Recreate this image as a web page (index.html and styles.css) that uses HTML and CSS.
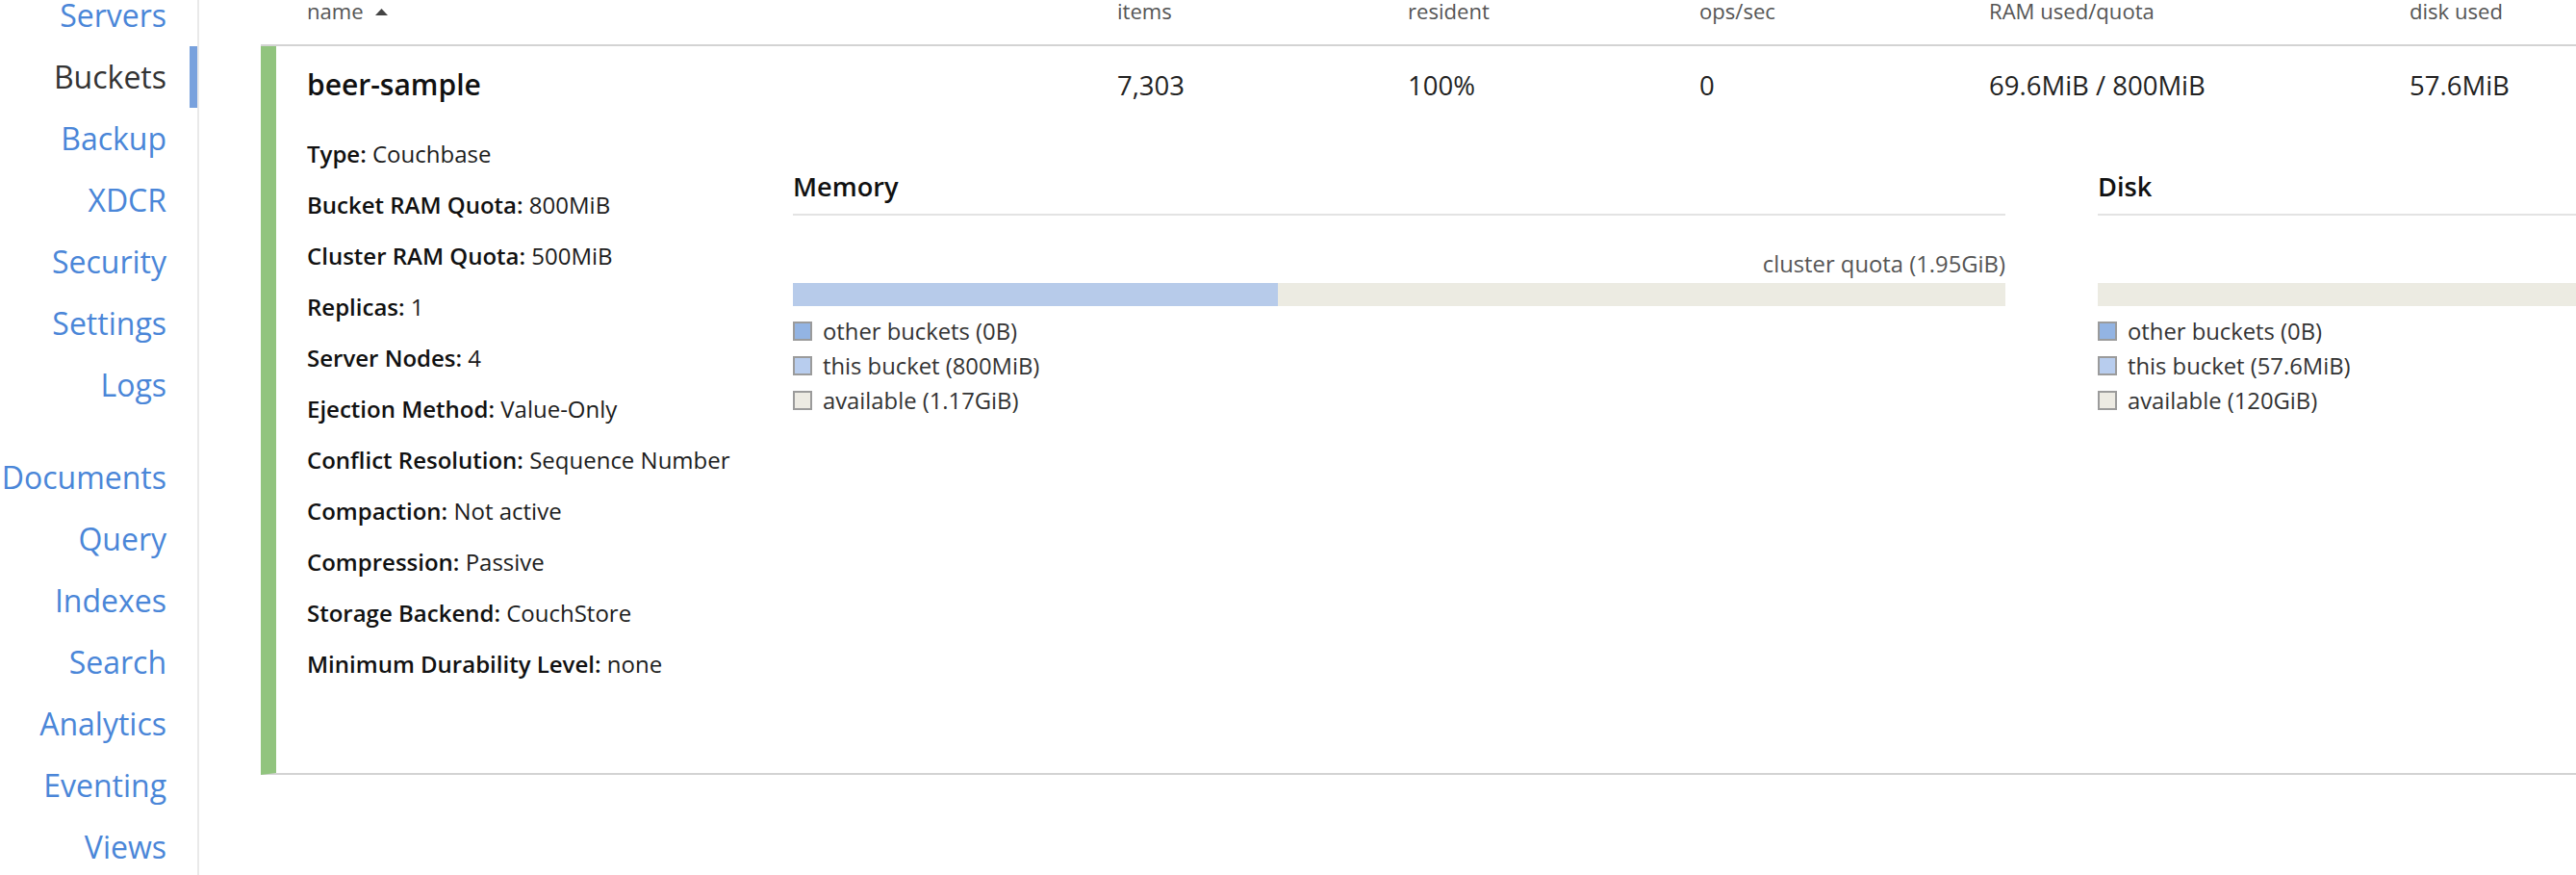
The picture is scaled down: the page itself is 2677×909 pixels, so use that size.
FILE: index.html
```html
<!DOCTYPE html>
<html lang="en">
<head>
<meta charset="utf-8">
<title>Buckets</title>
<link rel="stylesheet" href="styles.css">
</head>
<body>
<div class="page">
  <aside class="sidebar">
    <nav class="nav">
      <ul class="nav-group">
        <li><a class="nav-link">Servers</a></li>
        <li><a class="nav-link active">Buckets</a></li>
        <li><a class="nav-link">Backup</a></li>
        <li><a class="nav-link">XDCR</a></li>
        <li><a class="nav-link">Security</a></li>
        <li><a class="nav-link">Settings</a></li>
        <li><a class="nav-link">Logs</a></li>
      </ul>
      <ul class="nav-group">
        <li><a class="nav-link">Documents</a></li>
        <li><a class="nav-link">Query</a></li>
        <li><a class="nav-link">Indexes</a></li>
        <li><a class="nav-link">Search</a></li>
        <li><a class="nav-link">Analytics</a></li>
        <li><a class="nav-link">Eventing</a></li>
        <li><a class="nav-link">Views</a></li>
      </ul>
    </nav>
  </aside>

  <main class="main">
    <div class="table-header cols">
      <div class="th">name<svg class="sort-caret" viewBox="0 0 13 7" width="13" height="7"><path d="M0 7 L6.5 0 L13 7 Z" fill="#444"/></svg></div>
      <div class="th">items</div>
      <div class="th">resident</div>
      <div class="th">ops/sec</div>
      <div class="th">RAM used/quota</div>
      <div class="th">disk used</div>
    </div>

    <div class="bucket-row">
      <div class="row-top cols">
        <div class="bucket-name">beer-sample</div>
        <div class="stat">7,303</div>
        <div class="stat">100%</div>
        <div class="stat">0</div>
        <div class="stat">69.6MiB / 800MiB</div>
        <div class="stat">57.6MiB</div>
      </div>

      <div class="row-body">
        <div class="details">
          <div class="detail"><span class="label">Type:</span> Couchbase</div>
          <div class="detail"><span class="label">Bucket RAM Quota:</span> 800MiB</div>
          <div class="detail"><span class="label">Cluster RAM Quota:</span> 500MiB</div>
          <div class="detail"><span class="label">Replicas:</span> 1</div>
          <div class="detail"><span class="label">Server Nodes:</span> 4</div>
          <div class="detail"><span class="label">Ejection Method:</span> Value-Only</div>
          <div class="detail"><span class="label">Conflict Resolution:</span> Sequence Number</div>
          <div class="detail"><span class="label">Compaction:</span> Not active</div>
          <div class="detail"><span class="label">Compression:</span> Passive</div>
          <div class="detail"><span class="label">Storage Backend:</span> CouchStore</div>
          <div class="detail"><span class="label">Minimum Durability Level:</span> none</div>
        </div>

        <div class="usage-panels">
          <section class="usage">
            <h3 class="usage-title">Memory</h3>
            <div class="quota">cluster quota (1.95GiB)</div>
            <div class="bar"><div class="bar-fill" style="width:40%"></div></div>
            <ul class="legend">
              <li class="legend-item"><span class="swatch swatch-other"></span>other buckets (0B)</li>
              <li class="legend-item"><span class="swatch swatch-this"></span>this bucket (800MiB)</li>
              <li class="legend-item"><span class="swatch swatch-avail"></span>available (1.17GiB)</li>
            </ul>
          </section>
          <section class="usage">
            <h3 class="usage-title">Disk</h3>
            <div class="quota"></div>
            <div class="bar"></div>
            <ul class="legend">
              <li class="legend-item"><span class="swatch swatch-other"></span>other buckets (0B)</li>
              <li class="legend-item"><span class="swatch swatch-this"></span>this bucket (57.6MiB)</li>
              <li class="legend-item"><span class="swatch swatch-avail"></span>available (120GiB)</li>
            </ul>
          </section>
        </div>
      </div>
    </div>
  </main>
</div>
</body>
</html>
```

FILE: styles.css
```css
html, body {
  margin: 0;
  padding: 0;
  overflow: hidden;
  background: #fff;
}

body {
  font-family: "Open Sans", "Noto Sans", sans-serif;
  color: #222;
}

ul {
  list-style: none;
  margin: 0;
  padding: 0;
}

.page {
  display: flex;
  height: 100vh;
}

/* ---------- sidebar ---------- */
.sidebar {
  width: 205px;
  flex-shrink: 0;
  border-right: 2px solid #e9e9e9;
}

.nav {
  margin-top: -16px;
}

.nav-group {
  margin-bottom: 32px;
}

.nav-link {
  display: block;
  text-align: right;
  font-size: 32px;
  line-height: 64px;
  color: #4a86d8;
  padding-right: 24px;
  border-right: 8px solid transparent;
  cursor: pointer;
  white-space: nowrap;
}

.nav-link.active {
  color: #333;
  border-right-color: #78a1dd;
}

/* ---------- main ---------- */
.main {
  margin-left: 64px;
  width: 3400px;
  flex-shrink: 0;
}

.cols {
  display: grid;
  grid-template-columns: 842px 302px 303px 301px 437px 300px;
}

.table-header {
  margin-top: -4px;
  height: 50px;
  padding-left: 48px;
  border-bottom: 2px solid #d3d3d3;
  font-size: 22.1px;
  line-height: 30px;
  color: #555;
}

.sort-caret {
  display: inline-block;
  vertical-align: 4px;
  margin-left: 12px;
}

.bucket-row {
  border-left: 16px solid #91c47e;
  border-bottom: 2px solid #d3d3d3;
  padding: 20px 0 87px 32px;
}

.row-top {
  align-items: baseline;
  line-height: 40px;
}

.bucket-name {
  font-size: 30px;
  font-weight: 600;
  color: #111;
}

.stat {
  font-size: 27.5px;
  color: #222;
}

.row-body {
  display: flex;
  margin-top: 24px;
}

.details {
  width: 505px;
  flex-shrink: 0;
  font-size: 24px;
  line-height: 53px;
  color: #1c1c1c;
}

.label {
  font-weight: 600;
  color: #111;
}

.usage-panels {
  display: flex;
  gap: 96px;
}

.usage {
  width: 1260px;
  flex-shrink: 0;
}

.usage-title {
  margin: 41px 0 0;
  font-size: 27.2px;
  font-weight: 600;
  line-height: 40px;
  padding-bottom: 8px;
  border-bottom: 2px solid #e3e3e3;
  color: #111;
}

.quota {
  margin-top: 35px;
  height: 30px;
  line-height: 30px;
  font-size: 23.8px;
  text-align: right;
  color: #555;
}

.bar {
  margin-top: 5px;
  height: 24px;
  background: #ecebe2;
  display: flex;
}

.bar-fill {
  background: #b7cbea;
}

.legend {
  margin-top: 8px;
}

.legend-item {
  display: flex;
  align-items: center;
  height: 36px;
  font-size: 23.8px;
  color: #333;
}

.swatch {
  width: 20px;
  height: 20px;
  box-sizing: border-box;
  border: 2px solid #9b9b9b;
  margin-right: 11px;
  flex-shrink: 0;
}

.swatch-other { background: #93b4e3; }
.swatch-this { background: #b8cdee; }
.swatch-avail { background: #edebe3; }
```
